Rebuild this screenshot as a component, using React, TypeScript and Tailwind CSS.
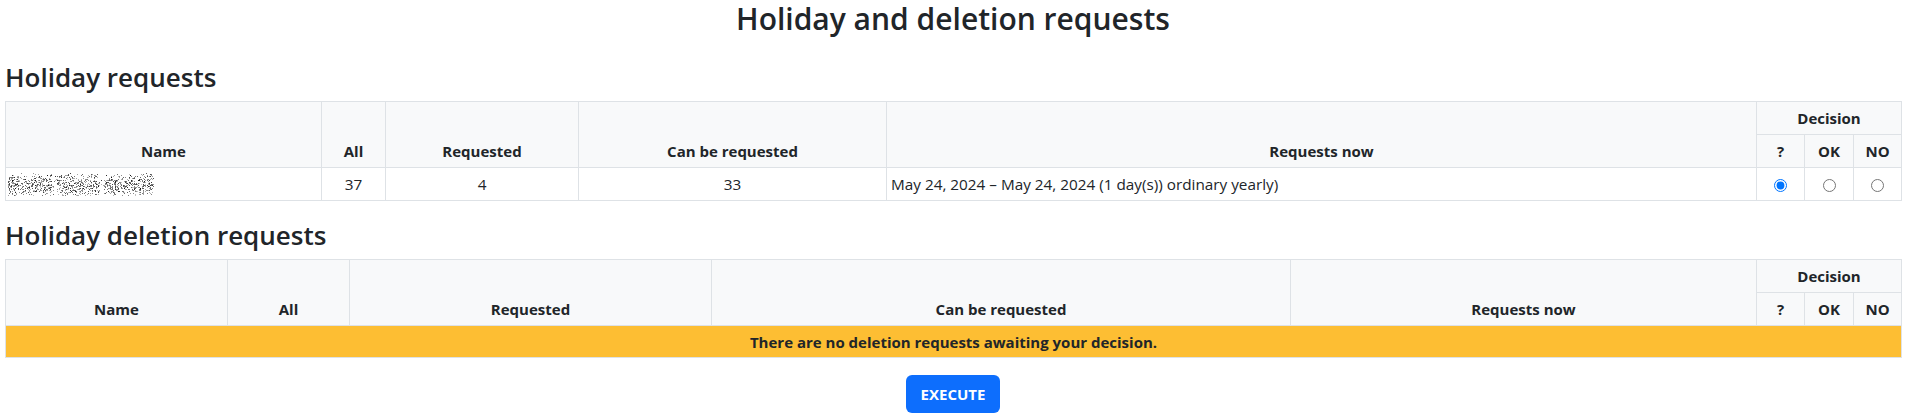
import React from "react";

function makeNoise() {
  let s = 987654;
  const rnd = () => {
    s = (s * 1103515245 + 12345) & 0x7fffffff;
    return s / 0x7fffffff;
  };
  const dots: { x: number; y: number; g: number; o: number }[] = [];
  const gaps = [[44, 48], [92, 95]];
  for (let i = 0; i < 2200; i++) {
    const x = Math.floor(rnd() * 146);
    const y = Math.floor(rnd() * 24);
    const d = Math.abs(y - 13) / 11;
    if (rnd() < d * 0.85) continue;
    if (gaps.some(([a, b]) => x >= a && x <= b) && rnd() < 0.75) continue;
    const g = Math.floor(10 + rnd() * 150);
    dots.push({ x, y, g, o: 0.45 + rnd() * 0.55 });
  }
  return dots;
}

const NOISE = makeNoise();

function BlurredName() {
  return (
    <svg width="146" height="24" viewBox="0 0 146 24" className="block">
      {NOISE.map((d, i) => (
        <rect
          key={i}
          x={d.x}
          y={d.y}
          width="1"
          height="1"
          fill={`rgb(${d.g},${d.g},${d.g})`}
          fillOpacity={d.o}
        />
      ))}
    </svg>
  );
}

const th =
  "border border-[#dee2e6] px-1 py-1 leading-6 align-bottom text-center font-bold";
const td = "border border-[#dee2e6] px-1 leading-6 align-middle";

function Radio({ checked, name }: { checked?: boolean; name: string }) {
  return (
    <input
      type="radio"
      name={name}
      defaultChecked={checked}
      className="m-0 align-middle w-[13px] h-[13px]"
    />
  );
}

export default function App() {
  return (
    <div className="font-['Open_Sans',sans-serif] text-[#212529] bg-white pl-[5px] pr-[4px] pb-[5px]">
      <h2 className="text-center text-[30px] font-semibold leading-[38px] h-[38px]">
        Holiday and deletion requests
      </h2>

      <h4 className="mt-[23px] mb-[8px] text-[26px] font-semibold leading-[32px] h-[32px]">
        Holiday requests
      </h4>
      <table className="w-full table-fixed border-collapse border border-[#dee2e6] text-[15px]">
        <colgroup>
          <col className="w-[316px]" />
          <col className="w-[64px]" />
          <col className="w-[193px]" />
          <col className="w-[308px]" />
          <col className="w-[870px]" />
          <col className="w-[48px]" />
          <col className="w-[49px]" />
          <col className="w-[48px]" />
        </colgroup>
        <thead className="bg-[#f8f9fa]">
          <tr className="h-[33px]">
            <th rowSpan={2} className={th}>Name</th>
            <th rowSpan={2} className={th}>All</th>
            <th rowSpan={2} className={th}>Requested</th>
            <th rowSpan={2} className={th}>Can be requested</th>
            <th rowSpan={2} className={th}>Requests now</th>
            <th colSpan={3} className={th}>Decision</th>
          </tr>
          <tr className="h-[33px]">
            <th className={th}>?</th>
            <th className={th}>OK</th>
            <th className={th}>NO</th>
          </tr>
        </thead>
        <tbody className="text-[15.3px]">
          <tr className="h-[33px]">
            <td className={td + " pl-[2px]"}>
              <BlurredName />
            </td>
            <td className={td + " text-center"}>37</td>
            <td className={td + " text-center"}>4</td>
            <td className={td + " text-center"}>33</td>
            <td className={td}>
              May 24, 2024 – May 24, 2024 (1 day(s)) ordinary yearly)
            </td>
            <td className={td + " text-center"}>
              <Radio name="r1" checked />
            </td>
            <td className={td + " text-center"}>
              <Radio name="r1" />
            </td>
            <td className={td + " text-center"}>
              <Radio name="r1" />
            </td>
          </tr>
        </tbody>
      </table>

      <h4 className="mt-[18px] mb-[8px] text-[26px] font-semibold leading-[32px] h-[32px]">
        Holiday deletion requests
      </h4>
      <table className="w-full table-fixed border-collapse border border-[#dee2e6] text-[15px]">
        <colgroup>
          <col className="w-[222px]" />
          <col className="w-[122px]" />
          <col className="w-[362px]" />
          <col className="w-[579px]" />
          <col className="w-[466px]" />
          <col className="w-[48px]" />
          <col className="w-[49px]" />
          <col className="w-[48px]" />
        </colgroup>
        <thead className="bg-[#f8f9fa]">
          <tr className="h-[33px]">
            <th rowSpan={2} className={th}>Name</th>
            <th rowSpan={2} className={th}>All</th>
            <th rowSpan={2} className={th}>Requested</th>
            <th rowSpan={2} className={th}>Can be requested</th>
            <th rowSpan={2} className={th}>Requests now</th>
            <th colSpan={3} className={th}>Decision</th>
          </tr>
          <tr className="h-[33px]">
            <th className={th}>?</th>
            <th className={th}>OK</th>
            <th className={th}>NO</th>
          </tr>
        </thead>
        <tbody>
          <tr className="h-[32px] bg-[#fdbe33]">
            <td colSpan={8} className={td + " text-center font-bold"}>
              There are no deletion requests awaiting your decision.
            </td>
          </tr>
        </tbody>
      </table>

      <div className="flex justify-center mt-[17px]">
        <button className="w-[94px] h-[38px] rounded-[6px] bg-[#0d6efd] text-white font-bold text-[15px]">
          EXECUTE
        </button>
      </div>
    </div>
  );
}
